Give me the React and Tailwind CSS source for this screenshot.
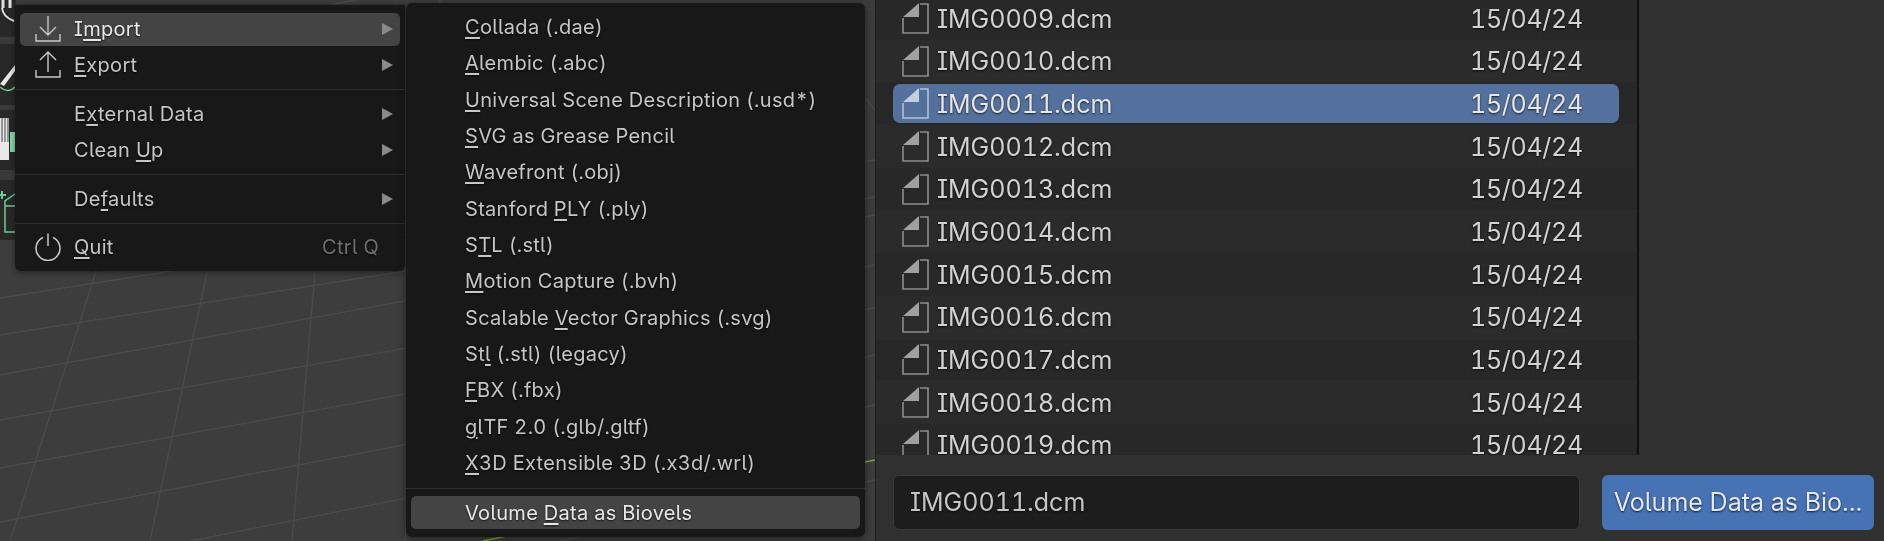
import React from 'react';

const importItems = [
  ['', 'C', 'ollada (.dae)'],
  ['', 'A', 'lembic (.abc)'],
  ['', 'U', 'niversal Scene Description (.usd*)'],
  ['', 'S', 'VG as Grease Pencil'],
  ['', 'W', 'avefront (.obj)'],
  ['Stanford ', 'P', 'LY (.ply)'],
  ['S', 'T', 'L (.stl)'],
  ['', 'M', 'otion Capture (.bvh)'],
  ['Scalable ', 'V', 'ector Graphics (.svg)'],
  ['St', 'l', ' (.stl) (legacy)'],
  ['', 'F', 'BX (.fbx)'],
  ['', 'g', 'lTF 2.0 (.glb/.gltf)'],
  ['', 'X', '3D Extensible 3D (.x3d/.wrl)'],
];

const files = ['0009', '0010', '0011', '0012', '0013', '0014', '0015', '0016', '0017', '0018', '0019'];

const shadow = '[text-shadow:0_1px_2px_rgba(0,0,0,0.75)]';

const Label = ({ parts }) => (
  <span className="whitespace-pre block">
    {parts[0]}
    <u className="underline decoration-[1.5px] underline-offset-[3px]">{parts[1]}</u>
    {parts[2]}
  </span>
);

const Arrow = () => (
  <svg width="11" height="12" viewBox="0 0 11 12" className="shrink-0">
    <path d="M0 0 L11 6 L0 12 Z" fill="#8a8a8a" />
  </svg>
);

const Sep = ({ className }) => <div className={`h-px bg-[#2e2e2e] ${className}`} />;

const MenuRow = ({ parts, icon, arrow, shortcut, active }) => (
  <div className="h-[36.33px] flex items-center px-[5px]">
    <div className={`flex-1 h-[33px] flex items-center rounded-[5px] pl-[15px] pr-[7px] ${active ? 'bg-[#444444] text-[#e8e8e8]' : ''}`}>
      <div className="w-[39px] h-full flex items-center shrink-0 text-[#c8c8c8]">{icon}</div>
      <div className="flex-1">
        <Label parts={parts} />
      </div>
      {arrow && <Arrow />}
      {shortcut && <span className="text-[#6f6f6f] mr-[14px]">{shortcut}</span>}
    </div>
  </div>
);

const ImportIcon = () => (
  <svg width="26" height="28" viewBox="0 0 26 28" fill="none" stroke="currentColor" strokeWidth="1.4">
    <path d="M13 1 V19 M5 12 L13 20 L21 12 M1 19 V26 H25 V19" />
  </svg>
);

const ExportIcon = () => (
  <svg width="26" height="28" viewBox="0 0 26 28" fill="none" stroke="currentColor" strokeWidth="1.4">
    <path d="M13 21 V2 M5 9 L13 1 L21 9 M1 19 V26 H25 V19" />
  </svg>
);

const PowerIcon = () => (
  <svg width="26" height="28" viewBox="0 0 26 28" fill="none" stroke="currentColor" strokeWidth="1.5">
    <path d="M13 0.5 V13 M8 4.5 A12 12 0 1 0 18 4.5" />
  </svg>
);

const FileIcon = ({ selected }) => (
  <svg width="27" height="31" viewBox="0 0 27 31" fill="none" className="shrink-0">
    <path d="M18 1 H26 V30 H1 V15" stroke={selected ? '#b4c0d4' : '#8c8c8c'} strokeWidth="1.6" />
    <path d="M1 14 L17 0 V14 Z" fill={selected ? '#c3cddd' : '#a0a0a0'} />
  </svg>
);

const Grid = () => (
  <svg className="absolute inset-0" width="875" height="541" fill="none" stroke="#4b4b4b" strokeWidth="1.3">
    <path d="M0 298 L875 160" />
    <path d="M0 335 L875 197" />
    <path d="M0 375 L875 215" />
    <path d="M0 420 L875 265" />
    <path d="M0 468 L875 308" />
    <path d="M0 522 L875 355" />
    <path d="M190 541 L875 405" />
    <path d="M560 541 L875 480" />
    <path d="M0 62 L875 -90" />
    <path d="M106 240 L10 541" />
    <path d="M207 272 L150 541" />
    <path d="M315 272 L292 541" />
    <path d="M440 0 L405 541" />
    <path d="M875 110 L820 40" />
    <path d="M483 541 L875 460" stroke="#7da33a" strokeWidth="1.6" />
  </svg>
);

const ToolStrip = () => (
  <div className="absolute left-0 top-0 w-[16px] h-[240px] bg-[#282828] flex flex-col overflow-hidden">
    <div className="h-[37px] relative">
      <svg width="16" height="37" fill="none" stroke="#e0e0e0" strokeWidth="2">
        <path d="M3 0 V8 M10 0 V8" strokeWidth="3" />
        <path d="M2 8 Q3 17 14 21" />
      </svg>
    </div>
    <div className="h-[7px] bg-[#3a3a3a]" />
    <div className="h-[61px]">
      <svg width="16" height="61" fill="none">
        <path d="M0 40 L15 21 L15 27 L4 42 Z" fill="#e8e8e8" />
        <path d="M0 43 Q8 50 15 43" stroke="#6fc79a" strokeWidth="1.5" />
      </svg>
    </div>
    <div className="h-[5px] bg-[#3a3a3a]" />
    <div className="h-[60px]">
      <svg width="16" height="60" fill="none">
        <rect x="0" y="8" width="9" height="42" fill="#e8e8e8" />
        <path d="M2 8 V32 M5 8 V32 M8 8 V32" stroke="#444" />
        <rect x="10" y="22" width="5" height="20" fill="#84d6a8" />
      </svg>
    </div>
    <div className="h-[10px] bg-[#3a3a3a]" />
    <div className="flex-1">
      <svg width="16" height="60" fill="none" stroke="#6fc79a" strokeWidth="1.5">
        <path d="M0 15 H6 M2 11 V19" strokeWidth="2" />
        <path d="M15 14 L5 21 V52 H15 M5 26 H15" />
      </svg>
    </div>
  </div>
);

const App = () => {
  return (
    <div className="w-[1884px] h-[541px] flex overflow-hidden bg-[#303030] font-['Inter','Liberation_Sans',sans-serif] [font-feature-settings:'cv08','cv05','tnum'] antialiased blur-[0.35px]">
      {/* 3D viewport with the open menus */}
      <div className="relative w-[875px] h-full bg-[#3d3d3d] shrink-0 overflow-hidden">
        <Grid />
        <ToolStrip />

        <div className={`absolute left-[15px] top-[4px] w-[390px] h-[267px] bg-[#181818] rounded-b-[6px] border-t border-[#2e2e2e] pt-[6px] text-[20px] tracking-[0.3px] text-[#c6c6c6] shadow-[0_2px_6px_rgba(0,0,0,0.4)] ${shadow}`}>
          <MenuRow parts={['I', 'm', 'port']} icon={<ImportIcon />} arrow active />
          <MenuRow parts={['', 'E', 'xport']} icon={<ExportIcon />} arrow />
          <Sep className="my-[5.5px]" />
          <MenuRow parts={['E', 'x', 'ternal Data']} arrow />
          <MenuRow parts={['Clean ', 'U', 'p']} arrow />
          <Sep className="mt-[6px] mb-[5.5px]" />
          <MenuRow parts={['De', 'f', 'aults']} arrow />
          <Sep className="my-[5.5px]" />
          <MenuRow parts={['', 'Q', 'uit']} icon={<PowerIcon />} shortcut="Ctrl Q" />
        </div>

        <div className={`absolute left-[406px] top-[3px] w-[459px] h-[534px] bg-[#181818] rounded-[6px] pt-[6px] text-[20px] tracking-[0.3px] text-[#c6c6c6] shadow-[0_2px_8px_rgba(0,0,0,0.45)] ${shadow}`}>
          {importItems.map((parts, i) => (
            <div key={i} className="h-[36.33px] flex items-center pl-[59px]">
              <Label parts={parts} />
            </div>
          ))}
          <Sep className="mt-[7px] mb-[7px]" />
          <div className="mx-[5px] h-[33px] flex items-center pl-[54px] rounded-[5px] bg-[#444444] text-[#e8e8e8]">
            <Label parts={['Volume ', 'D', 'ata as Biovels']} />
          </div>
        </div>
      </div>

      {/* File browser */}
      <div className="flex-1 flex flex-col h-full border-l border-[#1c1c1c]">
        <div className="h-[455px] flex overflow-hidden shrink-0">
          <div className={`w-[763px] h-full overflow-hidden bg-[#282828] border-r-2 border-[#111111] text-[25px] text-[#d2d2d2] ${shadow}`}>
            <div className="-mt-[3px]">
              {files.map((f, i) => (
                <div key={f} className={`h-[42.7px] flex items-center pl-[17px] pr-[18px] ${i % 2 ? 'bg-[#2b2b2b]' : ''}`}>
                  <div className={`flex-1 h-[39px] flex items-center rounded-[7px] pl-[9px] ${f === '0011' ? 'bg-[#54709c] text-[#e6e6e6]' : ''}`}>
                    <FileIcon selected={f === '0011'} />
                    <span className="ml-[8px] w-[533px] pt-[2px]">IMG{f}.dcm</span>
                    <span className="pt-[2px] tracking-[-0.3px]">15/04/24</span>
                  </div>
                </div>
              ))}
            </div>
          </div>
          <div className="flex-1 bg-[#303030]" />
        </div>
        <div className={`flex-1 flex gap-[22px] pl-[17px] pr-[10px] pt-[20px] pb-[11px] text-[25px] ${shadow}`}>
          <div className="w-[687px] rounded-[6px] bg-[#1d1d1d] border border-[#3a3a3a] flex items-center pl-[16px] text-[#c6c6c6]">IMG0011.dcm</div>
          <div className="flex-1 rounded-[6px] bg-[#4772b3] flex items-center justify-center text-[#e4e8ef] whitespace-nowrap overflow-hidden">Volume Data as Bio...</div>
        </div>
      </div>
    </div>
  );
};

export default App;
